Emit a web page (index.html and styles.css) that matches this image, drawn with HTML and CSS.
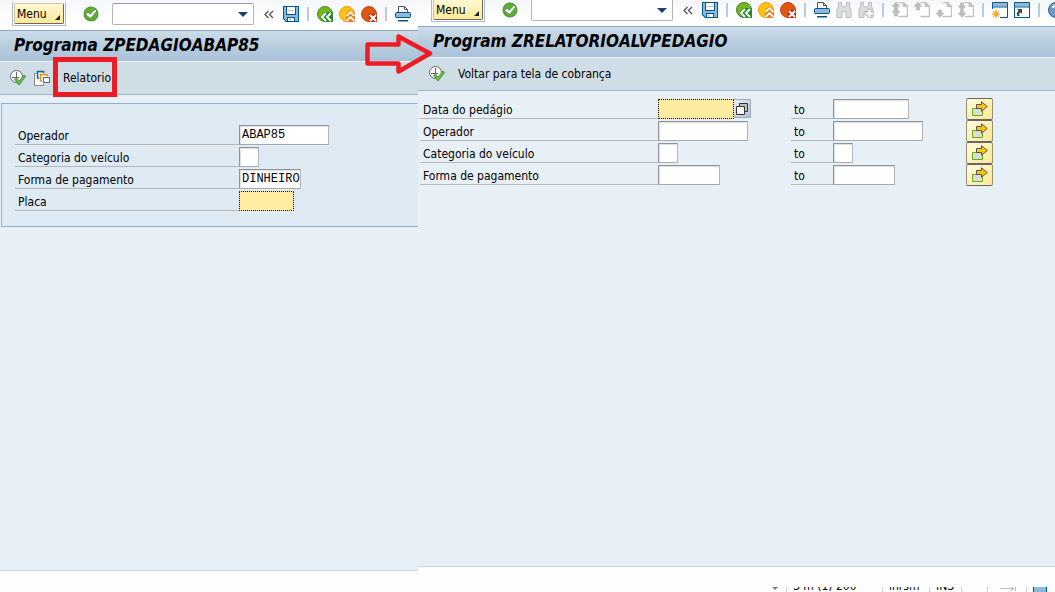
FILE: index.html
```
<!DOCTYPE html>
<html lang="pt-BR">
<head>
<meta charset="utf-8">
<title>Programa ZPEDAGIOABAP85</title>
<link rel="stylesheet" href="styles.css">
</head>
<body>
<svg class="defs" aria-hidden="true">
  <symbol id="ok" viewBox="0 0 16 16"><circle cx="8" cy="8" r="7.5" fill="#4a9a2c"/><circle cx="8" cy="8" r="6.5" fill="#5fae3a"/><path d="M2.5 8.5 5 6l2.2 2.3L12 3.2l2 1.8-6.5 7.6z" fill="#fff" stroke="#367d22" stroke-width=".7"/></symbol>
  <symbol id="save" viewBox="0 0 16 16"><path d="M0 0h16v16H3l-3-3z" fill="#00588c"/><path d="M1 1h2v8h10V1h2v14h-3v-4H4v4H3.500L1 12.500z" fill="#8fb9dc"/><path d="M4 1h8v7H4zM5 12h6v3H5z" fill="#fff"/><path d="M5 4.500h6" stroke="#b9c6d2"/><path d="M6 12h2v3H6z" fill="#c9d5df"/></symbol>
  <symbol id="back" viewBox="0 0 16 16"><circle cx="8" cy="8" r="7.5" fill="#77b51c" stroke="#3d8b2d"/><path d="M3 11 8 6h8v10H7z" fill="#2f8734"/><path d="m9 7-4 4 4 4m5-8-4 4 4 4" fill="none" stroke="#fff" stroke-width="1.8"/></symbol>
  <symbol id="up" viewBox="0 0 16 16"><circle cx="8" cy="8" r="7.5" fill="#fbc40b" stroke="#ee9b14"/><path d="M7 8l4-4 5 4v8H7z" fill="#ec7810"/><path d="m7.5 10 4-4 4 4m-8 5 4-4 4 4" fill="none" stroke="#fff" stroke-width="1.8"/></symbol>
  <symbol id="cancel" viewBox="0 0 16 16"><circle cx="8" cy="8" r="7.5" fill="#dd5713" stroke="#c14713"/><path d="M8 8h8v8H8z" fill="#b92913"/><path d="m9 9 6 6m0-6-6 6" stroke="#fff" stroke-width="2"/></symbol>
  <symbol id="print" viewBox="0 0 16 16"><path d="M3.5 7V.5h6l3 3V7" fill="#fff" stroke="#555"/><path d="M9.500.5v3h3" fill="none" stroke="#555"/><rect x=".5" y="6.500" width="15" height="5" rx="1" fill="#8fb9dc" stroke="#00588c"/><path d="M1 11h14v1H1zM3 14h10v1.500H3z" fill="#00588c"/></symbol>
  <symbol id="find" viewBox="0 0 16 16"><path d="M2.500.5h3v3L7 5h2l1.500-1.500v-3h3v4l1.500 3v8h-5V9.500h-4v6H1v-8l1.500-3z" fill="#dcdcdc" stroke="#bdbdbd"/></symbol>
  <symbol id="plus" viewBox="0 0 16 16"><path d="M10 7h3v3h3v3h-3v3h-3v-3H7v-3h3z" fill="#fff" stroke="#b7b7b7"/></symbol>
  <symbol id="page" viewBox="0 0 16 16"><path d="M6.500.5h5l4 4v10h-9" fill="#fff" stroke="#c2c2c2" stroke-width="1.500"/><path d="M10.500 0v5H16z" fill="#c2c2c2"/></symbol>
  <symbol id="au" viewBox="0 0 16 16"><path d="M4 0 .2 4.500h2.300V8h3V4.500h2.300z" fill="#bdbdbd" stroke="#b4b4b4" stroke-width=".6"/></symbol>
  <symbol id="ad" viewBox="0 0 16 16"><path d="M4 15.500.2 11h2.300V8h3v3h2.300z" fill="#bdbdbd" stroke="#b4b4b4" stroke-width=".6"/></symbol>
  <symbol id="win" viewBox="0 0 16 16"><path d="M.5.5h15v15H.5z" fill="#fff" stroke="#00588c"/><path d="M1 1h14v3.500H1z" fill="#8fb9dc"/><path d="M0 5h16" stroke="#00588c"/></symbol>
  <symbol id="spark" viewBox="0 0 16 16"><path d="M0 7h8v9H0z" fill="#fff"/><path d="M4 8v8M0 12h8M1.200 9.200l5.600 5.600m0-5.600-5.600 5.600" stroke="#f28a12"/><circle cx="4" cy="12" r="2.300" fill="#fbb40b"/></symbol>
  <symbol id="jump" viewBox="0 0 16 16"><path d="M3 7h5v5L6.200 10.300C4.500 12 5 13 6 14H3.500C2 12 3 10 4.700 8.800z" fill="#444"/></symbol>
  <symbol id="help" viewBox="0 0 16 16"><circle cx="8" cy="8" r="7.500" fill="#6b9bc8" stroke="#286496"/><path d="M5 6c0-3 6-3 6 0 0 2-3 2-3 4m0 1v2" stroke="#fff" stroke-width="2" fill="none"/></symbol>
  <symbol id="run" viewBox="0 0 16 16"><circle cx="6.500" cy="6.500" r="6" fill="#fff" stroke="#666"/><path d="M6.500 2v5.500M2 7.500h7M6.500 10v2" stroke="#666"/><path d="m4.500 9.500 2-1.500 2.500 3 5-6 1.700 1.500L9 15z" fill="#72bd48" stroke="#34852a" stroke-width=".8"/></symbol>
  <symbol id="variant" viewBox="0 0 16 16"><path d="M2.500 3.500h-2v12h9v-2" fill="#fff" stroke="#888"/><path d="M3.500 3h9v8h-9z" fill="#f4f7fa"/><path d="M9.500 3V1.500h-6V8H5" fill="none" stroke="#16669c" stroke-width="1.500"/><path d="M13 6V4.500H6.500V11H8" fill="none" stroke="#f28a12" stroke-width="1.500"/><path d="M9.500 7.500h6v5h-6z" fill="#fff" stroke="#666"/></symbol>
  <symbol id="multi" viewBox="0 0 16 16"><path d="M.5 7.500h10v7H.5z" fill="#dcdcdc" stroke="#62ad14"/><path d="M4.500 3.500h5V.8l5.800 4.700-5.800 4.700V7.500h-5z" fill="#fbc40b" stroke="#555"/></symbol>
  <symbol id="copies" viewBox="0 0 12 12"><path d="M3.500 3V.5h8v8H9" fill="#b9c2ad" stroke="#333"/><path d="M.5 3.500h8v8h-8z" fill="#fff" stroke="#333"/></symbol>
</svg>

<main class="screens">
  <section class="screen screen-left" aria-label="Programa ZPEDAGIOABAP85">
    <div class="toolbar">
      <div class="menu-frame"><button class="menu">Menu<i class="corner"></i></button></div>
      <button class="icon enter" aria-label="Enter"><svg><use href="#ok"/></svg></button>
      <div class="command"><select aria-label="Comando"><option></option></select><i class="caret"></i></div>
      <button class="collapse" aria-label="Recolher"><svg viewBox="0 0 14 16"><path d="M5.500 5 2 8.500 5.500 12M10 5 6.500 8.500 10 12" fill="none" stroke="#555" stroke-width="1.300"/></svg></button>
      <button class="icon" aria-label="Salvar"><svg><use href="#save"/></svg></button>
      <i class="sep"></i>
      <button class="icon" aria-label="Voltar"><svg><use href="#back"/></svg></button>
      <button class="icon" aria-label="Sair"><svg><use href="#up"/></svg></button>
      <button class="icon" aria-label="Cancelar"><svg><use href="#cancel"/></svg></button>
      <i class="sep"></i>
      <button class="icon" aria-label="Imprimir"><svg><use href="#print"/></svg></button>
    </div>
    <h1 class="title">Programa ZPEDAGIOABAP85</h1>
    <div class="actions">
      <button class="icon" aria-label="Executar"><svg><use href="#run"/></svg></button>
      <button class="icon" aria-label="Variante"><svg><use href="#variant"/></svg></button>
      <button class="action marked">Relatorio</button>
    </div>
    <form class="work">
      <div class="group">
        <div class="line"><label for="op">Operador</label><input id="op" class="w90" value="ABAP85"></div>
        <div class="line"><label for="cat">Categoria do veículo</label><input id="cat" class="w20"></div>
        <div class="line"><label for="pay">Forma de pagamento</label><input id="pay" class="w62" value="DINHEIRO"></div>
        <div class="line"><label for="plate">Placa</label><input id="plate" class="w55 active"></div>
      </div>
    </form>
    <div class="status"></div>
  </section>

  <section class="screen screen-right" aria-label="Program ZRELATORIOALVPEDAGIO">
    <div class="toolbar">
      <div class="menu-frame"><button class="menu">Menu<i class="corner"></i></button></div>
      <button class="icon enter" aria-label="Enter"><svg><use href="#ok"/></svg></button>
      <div class="command"><select aria-label="Comando"><option></option></select><i class="caret"></i></div>
      <button class="collapse" aria-label="Recolher"><svg viewBox="0 0 14 16"><path d="M5.500 5 2 8.500 5.500 12M10 5 6.500 8.500 10 12" fill="none" stroke="#555" stroke-width="1.300"/></svg></button>
      <button class="icon" aria-label="Salvar"><svg><use href="#save"/></svg></button>
      <i class="sep"></i>
      <button class="icon" aria-label="Voltar"><svg><use href="#back"/></svg></button>
      <button class="icon" aria-label="Sair"><svg><use href="#up"/></svg></button>
      <button class="icon" aria-label="Cancelar"><svg><use href="#cancel"/></svg></button>
      <i class="sep"></i>
      <button class="icon" aria-label="Imprimir"><svg><use href="#print"/></svg></button>
      <button class="icon" aria-label="Procurar"><svg><use href="#find"/></svg></button>
      <button class="icon" aria-label="Continuar procura"><svg><use href="#find"/><use href="#plus"/></svg></button>
      <i class="sep"></i>
      <button class="icon" aria-label="Primeira página"><svg viewBox="0 0 16 16"><use href="#page"/><use href="#au"/><use href="#au" y="6"/></svg></button>
      <button class="icon" aria-label="Página anterior"><svg><use href="#page"/><use href="#au"/></svg></button>
      <button class="icon" aria-label="Próxima página"><svg><use href="#page"/><use href="#ad"/></svg></button>
      <button class="icon" aria-label="Última página"><svg viewBox="0 0 16 16"><use href="#page"/><use href="#ad" y="-7"/><use href="#ad"/></svg></button>
      <i class="sep"></i>
      <button class="icon" aria-label="Novo modo"><svg><use href="#win"/><use href="#spark"/></svg></button>
      <button class="icon" aria-label="Criar atalho"><svg><use href="#win"/><use href="#jump"/></svg></button>
      <i class="sep"></i>
      <button class="icon" aria-label="Ajuda"><svg><use href="#help"/></svg></button>
    </div>
    <h1 class="title">Program ZRELATORIOALVPEDAGIO</h1>
    <div class="actions">
      <button class="icon" aria-label="Executar"><svg><use href="#run"/></svg></button>
      <button class="action">Voltar para tela de cobrança</button>
    </div>
    <form class="work">
      <div class="range"><label for="d1">Data do pedágio</label><div class="field"><input id="d1" class="w76 active"><button type="button" class="f4" aria-label="Ajuda de entrada"><svg><use href="#copies"/></svg></button></div><label for="d2">to</label><input id="d2" class="w76"><button type="button" class="multi" aria-label="Seleção múltipla"><svg><use href="#multi"/></svg></button></div>
      <div class="range"><label for="o1">Operador</label><input id="o1" class="w90"><label for="o2">to</label><input id="o2" class="w90"><button type="button" class="multi" aria-label="Seleção múltipla"><svg><use href="#multi"/></svg></button></div>
      <div class="range"><label for="c1">Categoria do veículo</label><input id="c1" class="w20"><label for="c2">to</label><input id="c2" class="w20"><button type="button" class="multi" aria-label="Seleção múltipla"><svg><use href="#multi"/></svg></button></div>
      <div class="range"><label for="f1">Forma de pagamento</label><input id="f1" class="w62"><label for="f2">to</label><input id="f2" class="w62"><button type="button" class="multi" aria-label="Seleção múltipla"><svg><use href="#multi"/></svg></button></div>
    </form>
    <div class="status">
      <div class="status-line">
        <i class="expand"></i><span class="system">S m (1) 200</span><span class="server">lnrsm</span><span class="mode">INS</span><span class="blank"></span><span class="link"><svg viewBox="0 0 28 16"><path d="M6 12.500h14M16 10l4 2.500-4 2.500M21.500 10v5" stroke="#bbb" fill="none"/></svg></span><span class="lock"></span>
      </div>
    </div>
  </section>
  <svg class="pointer" viewBox="0 0 68 42" aria-hidden="true"><path d="M2.500 11.500H33.500V3.500L65 20.500 33.500 38.500V30.500H2.500z" fill="none" stroke="#ed1c24" stroke-width="4.500" stroke-linejoin="round"/></svg>
</main>
</body>
</html>
```
FILE: styles.css
```
* { box-sizing: border-box; }
body {
  margin: 0;
  font: 12px/16px "DejaVu Sans Condensed", "DejaVu Sans", sans-serif;
  color: #000;
  background: #fefefe;
}
button, input, select { font: inherit; color: inherit; margin: 0; }
button { padding: 0; border: 0; background: none; white-space: nowrap; }
svg { display: block; }
.defs { position: absolute; width: 0; height: 0; }

.screens { position: relative; display: flex; height: 100vh; overflow: hidden; }
.screen { display: flex; flex-direction: column; overflow: hidden; }
.screen-left { flex: 0 0 418px; }
.screen-right { flex: 1; min-width: 0; }

.toolbar {
  display: flex;
  flex: none;
  align-items: center;
  gap: 6px;
  height: 30px;
  padding: 0 0 2px 12px;
  overflow: hidden;
  background: linear-gradient(#f5f7fb, #fff 20px);
}
.screen-right .toolbar { height: 26px; padding: 0 0 6px 13px; }
.menu-frame {
  flex: none;
  width: 54px;
  height: 24px;
  padding: 1px;
  border: 1px solid #a9bdd2;
  border-top: 0;
}
.menu {
  display: flex;
  align-items: center;
  justify-content: space-between;
  width: 50px;
  height: 21px;
  padding: 1px 3px 0 2px;
  border: 1px solid;
  border-color: #cfc79c #6e6850 #6e6850 #cfc79c;
  border-radius: 2px;
  background: linear-gradient(#fff8d2, #fde99a);
}
.corner {
  align-self: flex-end;
  margin-bottom: 3px;
  border-left: 5px solid transparent;
  border-bottom: 5px solid #222;
}
.icon { flex: none; width: 16px; height: 16px; }
.icon svg { width: 16px; height: 16px; }
.enter { margin: 0 7px 0 11px; }
.command { position: relative; flex: none; width: 142px; height: 22px; margin-right: 3px; }
.command select {
  width: 100%;
  height: 100%;
  appearance: none;
  border: 1px solid;
  border-color: #999ca0 #b0b3b7 #b0b3b7;
  border-radius: 2px;
  background: #fff;
}
.caret {
  position: absolute;
  top: 9px;
  right: 6px;
  border: 5px solid transparent;
  border-top-color: #203d70;
  border-bottom: 0;
}
.collapse { flex: none; width: 14px; height: 16px; }
.sep { flex: none; width: 2px; height: 14px; margin: 0 2px; background: #b4cbe2; }

.title {
  flex: none;
  height: 32px;
  margin: 0;
  padding: 0 14px;
  border-top: 1px solid #8ea6be;
  border-bottom: 1px solid #edf3f9;
  background: linear-gradient(#cbdcea, #b9cddd 50%, #a9c1da);
  font: italic bold 17px/28px "DejaVu Sans Condensed", "DejaVu Sans", sans-serif;
  white-space: nowrap;
}
.screen-right .title { padding: 0 15px; }
.actions {
  display: flex;
  flex: none;
  align-items: center;
  gap: 8px;
  height: 33px;
  padding: 0 10px;
  border-bottom: 1px solid #a4b6cc;
  background: #cfdde7;
}
.screen-right .actions { gap: 13px; padding: 0 11px; }
.marked { position: relative; margin-left: 5px; }
.marked::after {
  content: "";
  position: absolute;
  inset: -13px -6px -11px -10px;
  border: 5px solid #ed1c24;
}

.work { flex: 1; min-height: 0; border-bottom: 1px solid #d0d8e5; background: #e8f0f7; }
.screen-left .work { padding: 8px 0 0 1px; }
.screen-right .work { padding: 7px 0 0 2px; }
.group {
  padding: 20px 0 14px 13px;
  border: 1px solid #8fb2d2;
  border-right: 0;
  background: #deeaf4;
}
.line, .range { display: grid; align-items: center; height: 22px; }
.line { grid-template-columns: 224px 1fr; }
.range { grid-template-columns: 238px 133px 42px 133px 27px; }
.work label {
  height: 20px;
  padding-left: 3px;
  border-bottom: 1px solid #b7b7b7;
  line-height: 22px;
}
.work input {
  height: 20px;
  padding: 0 0 0 2px;
  border: 1px solid;
  border-color: #8f9398 #b2b5b8 #a6a9ad #8f9398;
  border-radius: 1px;
  background: #fff;
  box-shadow: inset 1px 1px 1px #dedede;
  font: 12px/16px "Liberation Mono", monospace;
}
.work input.active { border: 1px dotted #000; background: #feeda0; box-shadow: none; }
.w20 { width: 20px; }
.w55 { width: 55px; }
.w62 { width: 62px; }
.w76 { width: 76px; }
.w90 { width: 90px; }
.field { display: flex; }
.f4 {
  display: grid;
  place-items: center;
  width: 17px;
  height: 19px;
  border: 1px solid #a4abb5;
  border-left: 0;
  background: linear-gradient(135deg, #e8eef8, #b0c3e2);
}
.f4 svg { width: 12px; height: 12px; }
.multi {
  display: grid;
  place-items: center;
  width: 27px;
  height: 22px;
  border: 1px solid;
  border-color: #666 #99906b;
  border-radius: 2px;
  background: linear-gradient(135deg, #fffbe0, #fde795);
}
.multi svg { width: 16px; height: 16px; }

.status { flex: none; height: 21px; background: #fefefe; }
.screen-right .status { height: 25px; padding-top: 20px; }
.status-line {
  display: flex;
  align-items: flex-end;
  justify-content: flex-end;
  height: 5px;
  overflow: hidden;
}
.status-line span {
  flex: none;
  height: 16px;
  padding-left: 6px;
  border-left: 1px solid #ccc;
  line-height: 20px;
}
.expand {
  align-self: flex-start;
  margin-right: 8px;
  border: 3px solid transparent;
  border-top-color: #67819a;
  border-bottom: 0;
}
.system { width: 96px; }
.server { width: 47px; }
.mode { width: 32px; }
.blank { width: 26px; }
.link { width: 39px; }
.link svg { width: 28px; height: 16px; }
.lock { width: 29px; }
.lock::before {
  content: "";
  display: block;
  width: 12px;
  height: 15px;
  border: 1px solid #00588c;
  background: #8fb9dc;
}

.pointer { position: absolute; top: 33px; left: 365px; width: 68px; height: 42px; }
```
